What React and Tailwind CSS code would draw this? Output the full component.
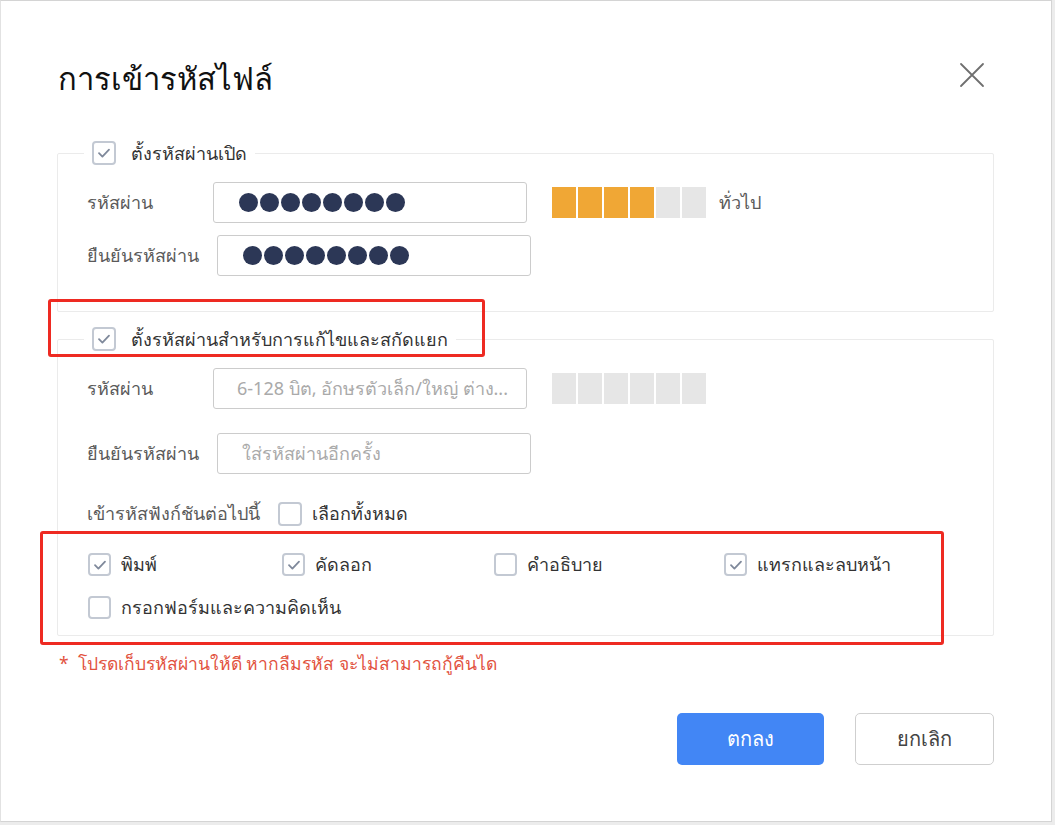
import React from "react";

function Box({ checked, size = 24 }) {
  return (
    <span
      className={`inline-flex shrink-0 items-center justify-center rounded-[4px] border-2 border-[#c3c9d3] bg-white ${size === 24 ? "w-[24px] h-[24px]" : "w-[23px] h-[23px]"}`}
    >
      {checked && (
        <svg width="14" height="14" viewBox="0 0 14 14" fill="none">
          <path d="M2 7.2 L5.4 10.6 L12 3.6" stroke="#7f899b" strokeWidth="1.8" strokeLinecap="round" strokeLinejoin="round" />
        </svg>
      )}
    </span>
  );
}

function Dots() {
  return (
    <div className="flex gap-[2px]">
      {[0, 1, 2, 3, 4, 5, 6, 7].map((i) => (
        <span key={i} className="w-[19px] h-[19px] rounded-full bg-[#2c3756]" />
      ))}
    </div>
  );
}

function Strength({ level }) {
  return (
    <div className="flex gap-[2px]">
      {[0, 1, 2, 3, 4, 5].map((i) => (
        <span key={i} className={`w-[24px] h-[31px] ${i < level ? "bg-[#f0a735]" : "bg-[#e6e6e6]"}`} />
      ))}
    </div>
  );
}

export default function App() {
  return (
    <div className="w-[1055px] h-[825px] bg-[#ececec] font-['Noto_Sans','DejaVu_Sans',sans-serif]">
      <div className="relative w-[1052px] h-[822px] bg-white border border-[#d4d4d4] border-l-[#e2e2e2]">
        {/* header */}
        <div className="flex items-start justify-between pl-[57px] pr-[66px] pt-[55px]">
          <h1 className="text-[31px] leading-[44px] text-[#111] font-normal">การเข้ารหัสไฟล์</h1>
          <button className="mt-[6px] w-[26px] h-[26px] flex items-center justify-center">
            <svg width="26" height="26" viewBox="0 0 26 26">
              <path d="M2 2 L24 24 M24 2 L2 24" stroke="#6f6f6f" strokeWidth="1.8" strokeLinecap="round" />
            </svg>
          </button>
        </div>

        <div className="pl-[56px] pr-[57px] mt-[41px]">
          {/* fieldset 1 */}
          <fieldset className="border border-[#ebebeb] rounded-[2px] pb-[35px]">
            <legend className="ml-[26px] px-[8px] flex items-center gap-[15px]">
              <Box checked />
              <span className="text-[18px] leading-[24px] text-[#333]">ตั้งรหัสผ่านเปิด</span>
            </legend>
            <div className="pl-[29px]">
              <div className="pt-[17px] flex items-center">
                <span className="w-[126px] text-[18px] text-[#5a5a5a]">รหัสผ่าน</span>
                <div className="w-[314px] h-[41px] rounded-[3px] border border-[#cccccc] flex items-center pl-[25px]">
                  <Dots />
                </div>
                <div className="ml-[25px]">
                  <Strength level={4} />
                </div>
                <span className="ml-[13px] text-[18px] text-[#5a5a5a]">ทั่วไป</span>
              </div>
              <div className="mt-[12px] flex items-center">
                <span className="w-[130px] text-[18px] text-[#5a5a5a]">ยืนยันรหัสผ่าน</span>
                <div className="w-[314px] h-[41px] rounded-[3px] border border-[#cccccc] flex items-center pl-[25px]">
                  <Dots />
                </div>
              </div>
            </div>
          </fieldset>

          {/* fieldset 2 */}
          <fieldset className="mt-[15px] border border-[#ebebeb] rounded-[2px] h-[309px]">
            <legend className="ml-[26px] px-[8px] flex items-center gap-[15px]">
              <Box checked />
              <span className="text-[18px] leading-[24px] text-[#333]">ตั้งรหัสผ่านสำหรับการแก้ไขและสกัดแยก</span>
            </legend>
            <div className="pl-[29px]">
              <div className="pt-[17px] flex items-center">
                <span className="w-[126px] text-[18px] text-[#5a5a5a]">รหัสผ่าน</span>
                <div className="w-[314px] h-[41px] rounded-[3px] border border-[#cccccc] flex items-center pl-[23px] overflow-hidden">
                  <span className="text-[18px] text-[#aaaaaa] whitespace-nowrap">6-128 บิต, อักษรตัวเล็ก/ใหญ่ ต่าง...</span>
                </div>
                <div className="ml-[25px]">
                  <Strength level={0} />
                </div>
              </div>
              <div className="mt-[24px] flex items-center">
                <span className="w-[130px] text-[18px] text-[#5a5a5a]">ยืนยันรหัสผ่าน</span>
                <div className="w-[314px] h-[41px] rounded-[3px] border border-[#cccccc] flex items-center pl-[24px]">
                  <span className="text-[18px] text-[#aaaaaa]">ใส่รหัสผ่านอีกครั้ง</span>
                </div>
              </div>
              <div className="mt-[26px] flex items-center">
                <span className="w-[191px] text-[18px] text-[#5a5a5a] whitespace-nowrap">เข้ารหัสฟังก์ชันต่อไปนี้</span>
                <Box />
                <span className="ml-[10px] text-[18px] text-[#333]">เลือกทั้งหมด</span>
              </div>
              <div className="mt-[26px] flex flex-wrap pl-[1px] gap-y-[20px]">
                <label className="w-[194px] flex items-center gap-[10px]">
                  <Box checked size={23} />
                  <span className="text-[18px] leading-[23px] text-[#333]">พิมพ์</span>
                </label>
                <label className="w-[212px] flex items-center gap-[10px]">
                  <Box checked size={23} />
                  <span className="text-[18px] leading-[23px] text-[#333]">คัดลอก</span>
                </label>
                <label className="w-[230px] flex items-center gap-[10px]">
                  <Box size={23} />
                  <span className="text-[18px] leading-[23px] text-[#333]">คำอธิบาย</span>
                </label>
                <label className="w-[220px] flex items-center gap-[10px]">
                  <Box checked size={23} />
                  <span className="text-[18px] leading-[23px] text-[#333]">แทรกและลบหน้า</span>
                </label>
                <label className="w-[300px] flex items-center gap-[10px]">
                  <Box size={23} />
                  <span className="text-[18px] leading-[23px] text-[#333]">กรอกฟอร์มและความคิดเห็น</span>
                </label>
              </div>
            </div>
          </fieldset>

          <p className="mt-[15px] pl-[2px] text-[17.5px] leading-[24px] text-[#e2533f]">*&nbsp; โปรดเก็บรหัสผ่านให้ดี หากลืมรหัส จะไม่สามารถกู้คืนได</p>

          <div className="mt-[38px] flex justify-end gap-[31px]">
            <button className="w-[147px] h-[52px] rounded-[5px] bg-[#4286f5] text-white text-[20px]">ตกลง</button>
            <button className="w-[139px] h-[52px] rounded-[5px] border border-[#cfcfcf] bg-white text-[#444] text-[20px]">ยกเลิก</button>
          </div>
        </div>

        {/* annotation overlays */}
        <div className="absolute left-[47px] top-[298px] w-[437px] h-[58px] border-[3px] border-[#ee2a22] rounded-[3px] pointer-events-none" />
        <div className="absolute left-[39px] top-[530px] w-[904px] h-[114px] border-[3px] border-[#ee2a22] rounded-[3px] pointer-events-none" />
      </div>
    </div>
  );
}
